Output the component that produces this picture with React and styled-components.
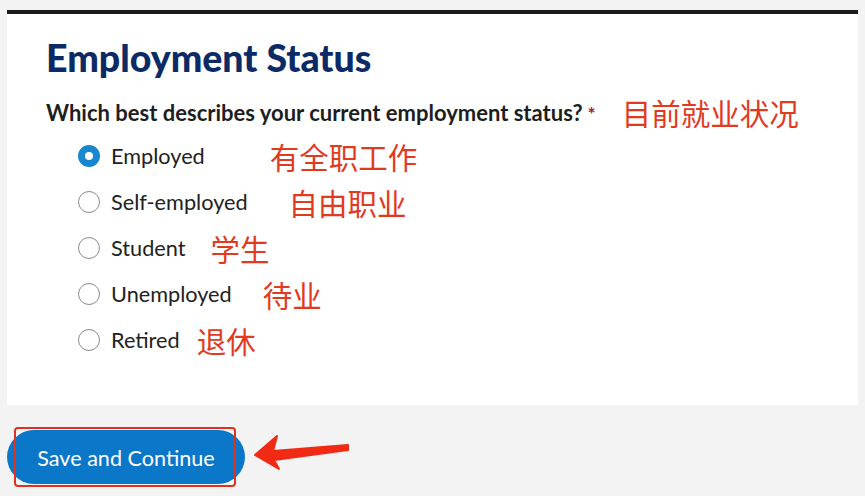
import React from "react";
import styled, { createGlobalStyle } from "styled-components";

const Global = createGlobalStyle`
  html, body { margin: 0; padding: 0; background: #f3f3f3; }
  body { font-family: Lato, "Noto Sans", sans-serif; }
`;

const Page = styled.div`
  padding: 10px 7px 0 7px;
  width: 851px;
`;

const Card = styled.section`
  background: #ffffff;
  border-top: 4px solid #1b1b1b;
  padding: 21px 0 30px 39px;
  box-sizing: border-box;
  height: 395px;
`;

const Title = styled.h1`
  margin: 0;
  font-family: Lato, sans-serif;
  font-weight: 900;
  font-size: 37.5px;
  line-height: 46px;
  color: #0c2b66;
`;

const QuestionRow = styled.div`
  display: flex;
  align-items: center;
  margin-top: 14px;
`;

const Question = styled.span`
  font-family: Lato, sans-serif;
  font-weight: 700;
  font-size: 22px;
  color: #1e1e1e;
`;

const Required = styled.span`
  color: #a01c36;
  margin-left: 5px;
  font-size: 19px;
`;

const Note = styled.span`
  font-family: "Noto Sans CJK SC", sans-serif;
  font-size: 29.5px;
  line-height: 34px;
  color: #e23a1f;
  margin-left: ${(p) => p.$gap}px;
`;

const Options = styled.div`
  display: flex;
  flex-direction: column;
  gap: 12px;
  margin-top: 10px;
  padding-left: 32px;
`;

const Option = styled.label`
  display: flex;
  align-items: center;
  height: 34px;
`;

const Radio = styled.span`
  width: 22px;
  height: 22px;
  box-sizing: border-box;
  border-radius: 50%;
  flex: none;
  border: ${(p) => (p.$checked ? "7px solid #1787d0" : "1.5px solid #8c8c8c")};
  background: #fff;
`;

const OptionText = styled.span`
  font-family: Lato, sans-serif;
  font-size: 21.7px;
  color: #222;
  margin-left: 11px;
`;

const Footer = styled.div`
  position: relative;
  margin-top: 25px;
  height: 60px;
`;

const Button = styled.button`
  width: 238px;
  height: 54px;
  border: none;
  border-radius: 27px;
  background: #0a77c9;
  color: #fff;
  font-family: Lato, sans-serif;
  font-size: 21.6px;
  padding: 2px 0 0;
  cursor: pointer;
`;

const Highlight = styled.div`
  position: absolute;
  left: 7px;
  top: -3px;
  width: 222px;
  height: 60px;
  box-sizing: border-box;
  border: 2.5px solid #e0311f;
  border-radius: 4px;
  pointer-events: none;
`;

const Arrow = styled.svg`
  position: absolute;
  left: 238px;
  top: 0;
`;

const options = [
  { label: "Employed", note: "有全职工作", gap: 65, checked: true },
  { label: "Self-employed", note: "自由职业", gap: 41 },
  { label: "Student", note: "学生", gap: 25 },
  { label: "Unemployed", note: "待业", gap: 31 },
  { label: "Retired", note: "退休", gap: 17 },
];

export default function App() {
  return (
    <>
      <Global />
      <Page>
        <Card>
          <Title>Employment Status</Title>
          <QuestionRow>
            <Question>
              Which best describes your current employment status?
              <Required>*</Required>
            </Question>
            <Note $gap={26}>目前就业状况</Note>
          </QuestionRow>
          <Options>
            {options.map((o) => (
              <Option key={o.label}>
                <Radio $checked={o.checked} />
                <OptionText>{o.label}</OptionText>
                <Note $gap={o.gap}>{o.note}</Note>
              </Option>
            ))}
          </Options>
        </Card>
        <Footer>
          <Button>Save and Continue</Button>
          <Highlight />
          <Arrow width="110" height="60" viewBox="0 0 110 60">
            <path d="M10 25 L32 6 L28 21 L103 15 L103 20 L29 30 L34 39 Z" fill="#f02a14" stroke="#f02a14" strokeWidth="2" strokeLinejoin="round" />
          </Arrow>
        </Footer>
      </Page>
    </>
  );
}
